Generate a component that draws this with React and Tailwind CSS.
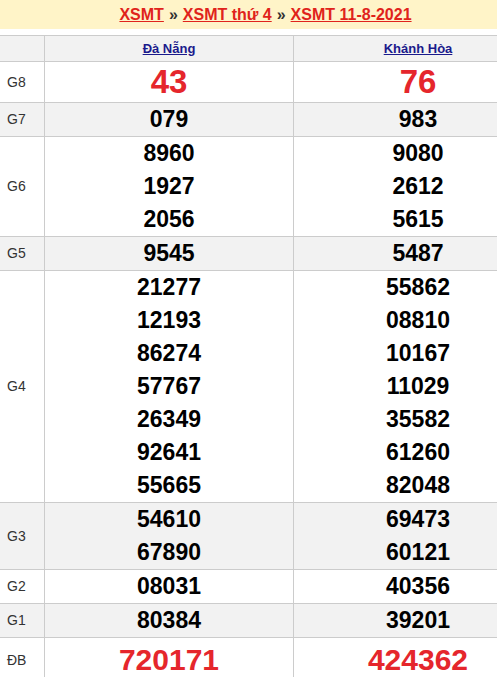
import React from 'react';

const rows = [
  { label: 'G8', a: ['43'], b: ['76'], big: true },
  { label: 'G7', a: ['079'], b: ['983'] },
  { label: 'G6', a: ['8960', '1927', '2056'], b: ['9080', '2612', '5615'] },
  { label: 'G5', a: ['9545'], b: ['5487'] },
  {
    label: 'G4',
    a: ['21277', '12193', '86274', '57767', '26349', '92641', '55665'],
    b: ['55862', '08810', '10167', '11029', '35582', '61260', '82048'],
  },
  { label: 'G3', a: ['54610', '67890'], b: ['69473', '60121'] },
  { label: 'G2', a: ['08031'], b: ['40356'] },
  { label: 'G1', a: ['80384'], b: ['39201'] },
  { label: 'ĐB', a: ['720171'], b: ['424362'], special: true },
];

const Cell = ({ nums, big, special }) => {
  return (
    <div className="w-[249px] border-l border-[#cccccc] flex flex-col items-center justify-center">
      {nums.map((n) => {
        if (big) {
          return (
            <span key={n} className="text-[33px] leading-[40px] font-bold text-[#e5262c]">
              {n}
            </span>
          );
        }
        if (special) {
          return (
            <span key={n} className="text-[30px] leading-[44px] font-bold text-[#e5262c]">
              {n}
            </span>
          );
        }
        return (
          <span key={n} className="text-[23px] leading-[33px] font-bold text-black">
            {n}
          </span>
        );
      })}
    </div>
  );
};

const App = () => {
  return (
    <div className="w-[497px] h-[677px] overflow-hidden bg-white font-['Liberation_Sans',Arial,sans-serif]">
      {/* Title */}
      <div className="h-[29px] bg-[#fff4c8] flex items-center justify-center pl-[34px] text-[16px] font-bold">
        <a className="text-[#e0231b] underline">XSMT</a>
        <span className="text-[#333333] mx-[5px]">»</span>
        <a className="text-[#e0231b] underline">XSMT thứ 4</a>
        <span className="text-[#333333] mx-[5px]">»</span>
        <a className="text-[#e0231b] underline">XSMT 11-8-2021</a>
      </div>

      {/* Table */}
      <div className="mt-[6px] w-[542px] border-t border-[#cccccc]">
        <div className="flex h-[26px] bg-[#f2f2f2] border-b border-[#cccccc]">
          <div className="w-[44px]" />
          <div className="w-[249px] border-l border-[#cccccc] flex items-center justify-center">
            <a className="text-[13px] font-bold text-[#1a1a8c] underline">Đà Nẵng</a>
          </div>
          <div className="w-[249px] border-l border-[#cccccc] flex items-center justify-center">
            <a className="text-[13px] font-bold text-[#1a1a8c] underline">Khánh Hòa</a>
          </div>
        </div>
        {rows.map((r, i) => (
          <div
            key={r.label}
            className={`flex border-b border-[#cccccc] ${i % 2 === 1 ? 'bg-[#f2f2f2]' : 'bg-white'}`}
          >
            <div className="w-[44px] flex items-center pl-[7px] text-[14px] text-[#333333]">
              {r.label}
            </div>
            <Cell nums={r.a} big={r.big} special={r.special} />
            <Cell nums={r.b} big={r.big} special={r.special} />
          </div>
        ))}
      </div>
    </div>
  );
};

export default App;
